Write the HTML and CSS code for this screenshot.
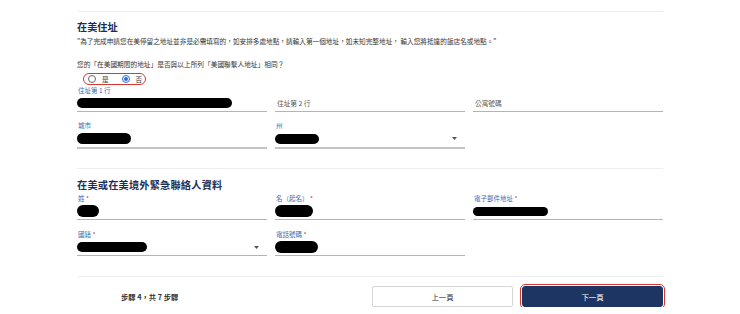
FILE: index.html
```html
<!DOCTYPE html>
<html lang="zh-Hant">
<head>
<meta charset="utf-8">
<title>在美住址</title>
<link rel="stylesheet" href="styles.css">
</head>
<body>
<main class="page">
  <div class="sep"></div>
  <h2 class="title t1">在美住址</h2>
  <p class="desc">"為了完成申請您在美停留之地址並非是必需填寫的，如安排多處地點，請輸入第一個地址，如未知完整地址， 輸入您將抵達的飯店名或地點。"</p>
  <p class="question">您的「在美國期間的地址」是否與以上所列「美國聯繫人地址」相同？</p>
  <div class="radios">
    <span class="radio"></span><span class="rlabel">是</span>
    <span class="radio on"></span><span class="rlabel">否</span>
  </div>

  <div class="grid row-addr">
    <div class="field">
      <div class="label">住址第 1 行</div>
      <div class="value"><span class="redact" style="width:155px;height:10px"></span></div>
    </div>
    <div class="field">
      <div class="label"></div>
      <div class="value"><span class="ph">住址第 2 行</span></div>
    </div>
    <div class="field">
      <div class="label"></div>
      <div class="value"><span class="ph">公寓號碼</span></div>
    </div>
  </div>

  <div class="grid row-city">
    <div class="field">
      <div class="label">城市</div>
      <div class="value thick"><span class="redact" style="width:54px;height:11px"></span></div>
    </div>
    <div class="field">
      <div class="label">州</div>
      <div class="value thick"><span class="redact" style="width:44px;height:10px"></span><span class="chev"><svg width="5" height="3" viewBox="0 0 5 3"><path d="M0 0H5L2.5 3Z" fill="#555"/></svg></span></div>
    </div>
  </div>

  <div class="sep sep2"></div>
  <h2 class="title t2">在美或在美境外緊急聯絡人資料</h2>

  <div class="grid row-e1">
    <div class="field">
      <div class="label">姓 <span class="req">*</span></div>
      <div class="value"><span class="redact" style="width:22px;height:12px"></span></div>
    </div>
    <div class="field">
      <div class="label">名（起名） <span class="req">*</span></div>
      <div class="value"><span class="redact" style="width:38px;height:12px"></span></div>
    </div>
    <div class="field">
      <div class="label">電子郵件地址 <span class="req">*</span></div>
      <div class="value"><span class="redact" style="width:75px;height:9px"></span></div>
    </div>
  </div>

  <div class="grid row-e2">
    <div class="field">
      <div class="label">國籍 <span class="req">*</span></div>
      <div class="value"><span class="redact" style="width:70px;height:10px"></span><span class="chev"><svg width="5" height="3" viewBox="0 0 5 3"><path d="M0 0H5L2.5 3Z" fill="#555"/></svg></span></div>
    </div>
    <div class="field">
      <div class="label">電話號碼 <span class="req">*</span></div>
      <div class="value"><span class="redact" style="width:43px;height:12px"></span></div>
    </div>
  </div>

  <div class="sep sep3"></div>

  <footer class="footer">
    <span class="step">步驟 4，共 7 步驟</span>
    <div class="buttons">
      <button class="btn prev">上一頁</button>
      <button class="btn next">下一頁</button>
    </div>
  </footer>
</main>
</body>
</html>
```

FILE: styles.css
```css
* { box-sizing: border-box; }
html, body { margin: 0; padding: 0; background: #fff; }
body {
  font-family: "Noto Sans CJK TC", "Liberation Sans", sans-serif;
  color: #333;
}
.page {
  width: 586px;
  margin: 0 auto;
  padding: 11px 0 0 0;
}
.sep { height: 1px; background: #eeeeee; }
.title {
  margin: 9px 0 0 0;
  font-size: 10.2px;
  line-height: 12px;
  font-weight: 700;
  color: #1d2f57;
}
.t2 { margin-top: 10px; letter-spacing: 0.2px; }
.desc {
  margin: 4px 0 0 0;
  font-size: 6.65px;
  line-height: 9px;
  color: #333;
  white-space: nowrap;
}
.question {
  margin: 14px 0 0 0;
  font-size: 6.7px;
  line-height: 9px;
  color: #333;
}
.radios {
  margin: 4px 0 0 6px;
  width: 63px;
  height: 12px;
  border: 1.2px solid #d7372e;
  border-radius: 6px;
  display: flex;
  align-items: center;
  padding-left: 4px;
}
.radio {
  width: 8px;
  height: 8px;
  border: 1px solid #666;
  border-radius: 50%;
  display: inline-flex;
  align-items: center;
  justify-content: center;
  flex: none;
}
.radio.on { border-color: #2d6fd6; }
.radio.on::after {
  content: "";
  width: 4px;
  height: 4px;
  border-radius: 50%;
  background: #2d6fd6;
}
.rlabel {
  font-size: 6.6px;
  line-height: 9px;
  margin-left: 6px;
  margin-right: 13px;
  color: #333;
}
.rlabel:last-child { margin-right: 0; }

.grid {
  display: grid;
  grid-template-columns: 190px 190px 190px;
  column-gap: 8px;
}
.row-addr { margin-top: 1px; }
.row-city { margin-top: 9px; }
.row-e1 { margin-top: 3px; }
.row-e2 { margin-top: 10px; }
.label {
  height: 9px;
  font-size: 6.5px;
  line-height: 9px;
  color: #3a69b0;
  white-space: nowrap;
  padding-left: 1px;
}
.req { color: #d3302a; }
.value {
  height: 17px;
  border-bottom: 1px solid #b4b4b4;
  display: flex;
  align-items: center;
  justify-content: space-between;
  padding-right: 8px;
}
.value.thick { border-bottom: 2px solid #c4c4c4; height: 19px; }
.redact {
  display: block;
  background: #000;
  border-radius: 6px;
}
.ph {
  font-size: 6.7px;
  line-height: 9px;
  color: #555;
  margin-left: 2px;
}
.chev { display: flex; align-items: center; }
.sep2 { margin-top: 19px; }
.sep3 { margin-top: 20px; }

.footer {
  margin-top: 9px;
  display: flex;
  align-items: center;
  justify-content: space-between;
}
.step {
  margin-left: 44px;
  font-size: 7.3px;
  font-weight: 700;
  color: #333;
}
.buttons { display: flex; gap: 9px; }
.btn {
  width: 141px;
  height: 21px;
  font-family: "Noto Sans CJK TC", "Liberation Sans", sans-serif;
  font-size: 7.4px;
  border-radius: 2px;
  padding: 0;
}
.prev {
  background: #fff;
  border: 1px solid #d6d6d6;
  color: #333;
}
.next {
  background: #1c3562;
  border: 1px solid #1c3562;
  color: #fff;
  outline: 1.3px solid #d7372e;
  outline-offset: 1.5px;
  border-radius: 3px;
}
```
